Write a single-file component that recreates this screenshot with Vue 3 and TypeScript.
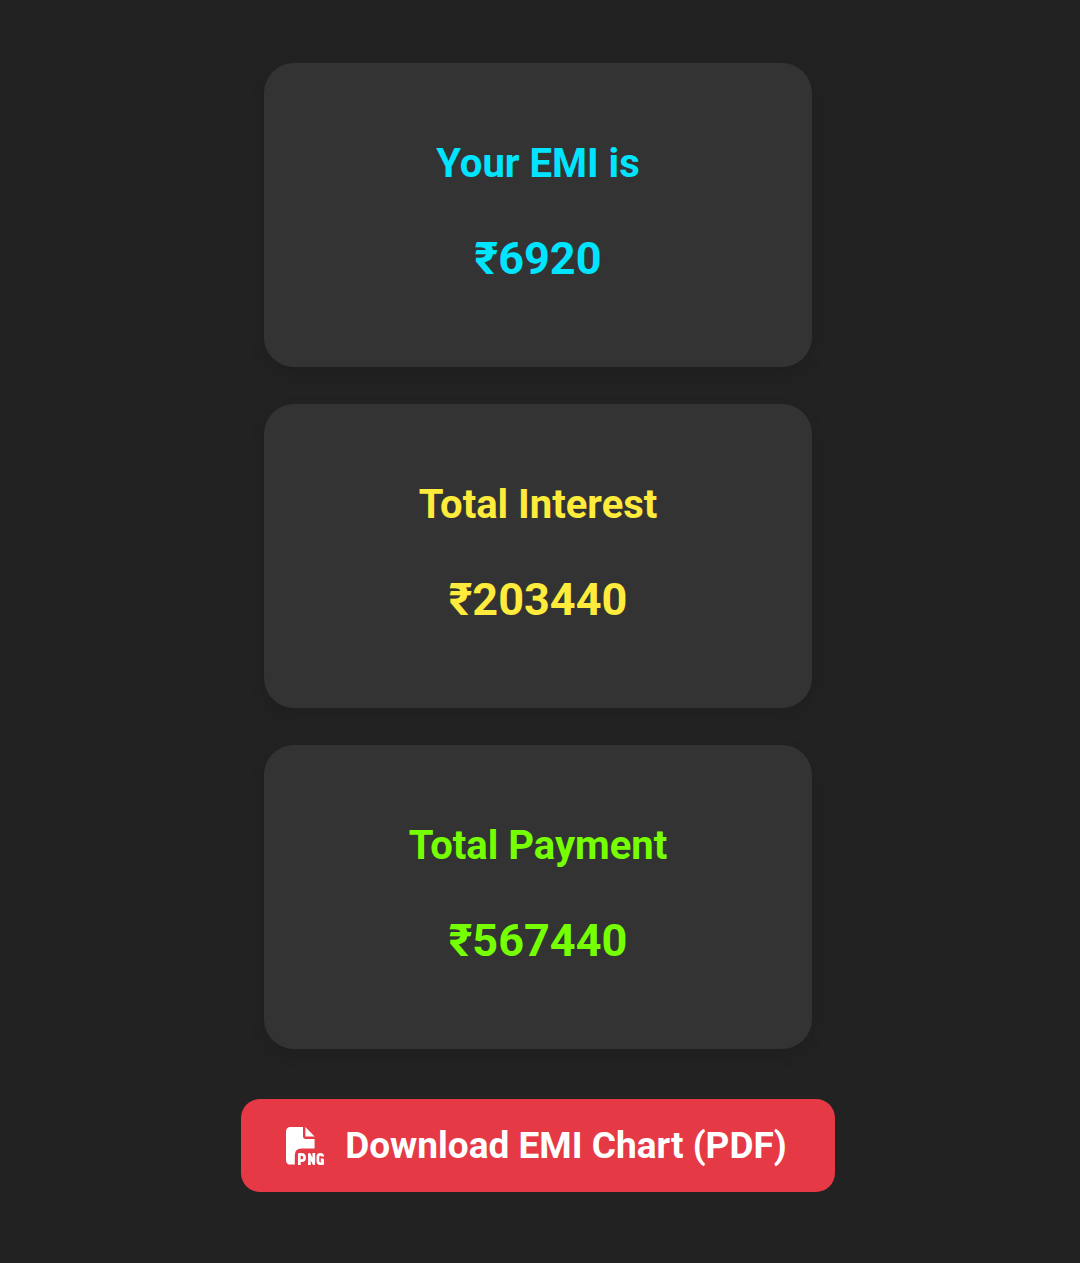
<script setup lang="ts">
interface Result {
  label: string
  amount: number
  tone: string
}

const results: Result[] = [
  { label: 'Your EMI is', amount: 6920, tone: 'cyan' },
  { label: 'Total Interest', amount: 203440, tone: 'yellow' },
  { label: 'Total Payment', amount: 567440, tone: 'green' },
]
</script>

<template>
  <main class="page">
    <section class="results">
      <article v-for="item in results" :key="item.label" class="card" :class="item.tone">
        <h2 class="label">{{ item.label }}</h2>
        <p class="amount">₹{{ item.amount }}</p>
      </article>
    </section>
    <button type="button" class="download">
      <svg class="icon" viewBox="0 0 38 38" aria-hidden="true">
        <path fill="#fff" d="M4.700 0H17V9.500Q17 11.900 19.400 11.900H28.600V21.500H15.500Q8.800 21.500 8.800 28.200V37.600H4.700Q0 37.600 0 32.900V4.700Q0 0 4.700 0Z" />
        <path fill="#fff" d="M19.400 0L28.600 9.400H19.400Z" />
        <g fill="none" stroke="#fff" stroke-width="2.700" stroke-linejoin="round">
          <path d="M13.300 38V27.300H15.500C19.600 27.300 19.600 33.700 15.500 33.700H13.300" />
          <path d="M23.400 38V27.300L27.800 36.700V26" />
          <path d="M36.600 29.500V29Q36.600 27.300 34.300 27.300Q31.900 27.300 31.900 30V34Q31.900 36.700 34.300 36.700H36.600V32.900H34.800" />
        </g>
      </svg>
      <span>Download EMI Chart (PDF)</span>
    </button>
  </main>
</template>

<style>
body {
  background: #222;
}
</style>

<style scoped>
.page {
  display: flex;
  flex-direction: column;
  align-items: center;
  gap: 50px;
  padding: 63px 4px 70px 0;
  font-family: Roboto, sans-serif;
}

.results {
  display: flex;
  flex-direction: column;
  gap: 37px;
  width: 100%;
  max-width: 548px;
}

.card {
  box-sizing: border-box;
  padding: 77px 37px 80px;
  border-radius: 30px;
  background: #333;
  box-shadow: 0 6px 16px rgba(0, 0, 0, 0.12);
  text-align: center;
}

.label {
  margin: 0 0 42px;
  font-size: 40px;
  font-weight: 700;
  line-height: 48px;
}

.amount {
  margin: 0;
  font-size: 45px;
  font-weight: 700;
  line-height: 57px;
}

.cyan {
  color: #00e5ff;
}

.yellow {
  color: #ffeb3b;
}

.green {
  color: #76ff03;
}

.download {
  display: flex;
  align-items: center;
  gap: 21px;
  padding: 22px 48px 22px 45px;
  border: 0;
  border-radius: 19px;
  background: #e63946;
  color: #fff;
  font-family: inherit;
  font-size: 37px;
  font-weight: 700;
  line-height: 49px;
  cursor: pointer;
}

.icon {
  flex: none;
  width: 38px;
  height: 38px;
}
</style>
